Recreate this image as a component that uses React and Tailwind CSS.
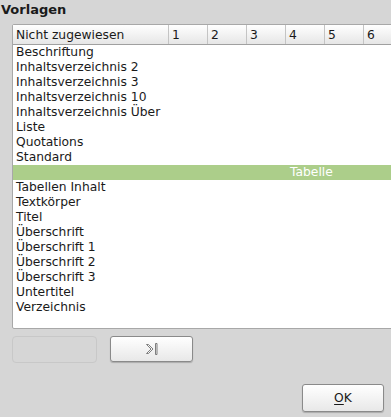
import React from 'react';

const items = [
  'Beschriftung',
  'Inhaltsverzeichnis 2',
  'Inhaltsverzeichnis 3',
  'Inhaltsverzeichnis 10',
  'Inhaltsverzeichnis Über',
  'Liste',
  'Quotations',
  'Standard',
  'Tabelle',
  'Tabellen Inhalt',
  'Textkörper',
  'Titel',
  'Überschrift',
  'Überschrift 1',
  'Überschrift 2',
  'Überschrift 3',
  'Untertitel',
  'Verzeichnis',
];

const cols = ['1', '2', '3', '4', '5', '6'];

export default function App() {
  return (
    <div className="w-[391px] h-[417px] bg-[#d6d6d6] overflow-hidden relative text-[12.3px] text-[#1a1a1a] font-['DejaVu_Sans',sans-serif]">
      <div className="px-[1px] pt-[1px] h-[23px] leading-[18px] font-bold text-[13px]">Vorlagen</div>

      <div className="ml-[12px] mt-[1px] w-[420px] h-[305px] bg-white border border-[#a8a8a8] rounded-tl-[2px] rounded-bl-[2px]">
        <div className="flex h-[20px] border-b border-[#a0a0a0] bg-gradient-to-b from-white to-[#e6e6e6]">
          <div className="w-[156px] pl-[3px] leading-[20px] border-r border-[#c4c4c4]">Nicht zugewiesen</div>
          {cols.map((c) => (
            <div key={c} className="w-[39px] pl-[3px] leading-[20px] border-r border-[#c4c4c4]">{c}</div>
          ))}
        </div>
        <div>
          {items.map((it) =>
            it === 'Tabelle' ? (
              <div key={it} className="h-[15px] leading-[15px] bg-[#acce8a] text-white pl-[277px]">{it}</div>
            ) : (
              <div key={it} className="h-[15px] leading-[15px] pl-[3px]">{it}</div>
            )
          )}
        </div>
      </div>

      <div className="flex gap-[13px] ml-[12px] mt-[7px]">
        <div className="w-[85px] h-[27px] rounded-[4px] border border-[#c8c8c8] bg-[#d6d6d6]"></div>
        <button className="w-[83px] h-[26px] rounded-[3px] border border-[#8a8a8a] bg-gradient-to-b from-white to-[#e8e8e8] shadow-[0_1px_1px_rgba(0,0,0,0.2)] flex items-center justify-center">
          <svg width="16" height="16" viewBox="0 0 16 16" fill="none" stroke="#707070" strokeWidth="0.9">
            <path d="M2.5 3.5 H4.5 L9 8 L4.5 12.5 H2.5 L7 8 Z" />
            <path d="M11.5 2.5 H13 V13.5 H11.5 Z" />
          </svg>
        </button>
      </div>

      <div className="flex justify-end pr-[7px] mt-[21px]">
        <button className="w-[82px] h-[28px] rounded-[3px] border border-[#8a8a8a] bg-gradient-to-b from-white to-[#e8e8e8] shadow-[0_1px_1px_rgba(0,0,0,0.2)] text-[12.3px] font-['DejaVu_Sans',sans-serif]">
          <span className="underline underline-offset-2">O</span>K
        </button>
      </div>
    </div>
  );
}
